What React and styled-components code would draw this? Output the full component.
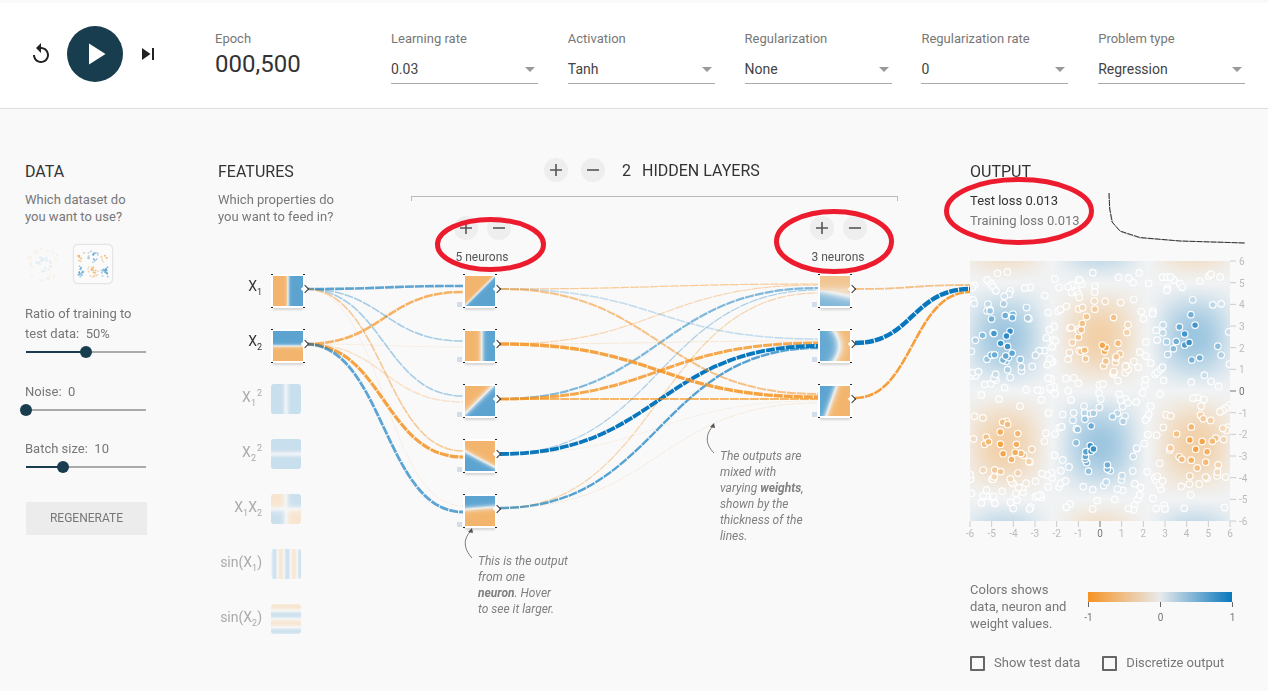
import React, { useEffect, useRef } from 'react'
import styled, { createGlobalStyle } from 'styled-components'

const BLUE = '#0877bd'
const ORANGE = '#f59322'
const DARK = '#183d4e'

const GlobalStyle = createGlobalStyle`
  html, body {
    margin: 0;
    height: 100%;
    overflow: hidden;
    background: #f9f9fa;
    font-family: Roboto, "Liberation Sans", sans-serif;
    color: #777;
  }
`

// colour scale of the playground, v from -1 to 1
const mix = (a, b, t) => a.map((c, i) => c + (b[i] - c) * t)
const scale = v => {
  const neutral = [240, 242, 243]
  const t = Math.max(-1, Math.min(1, v))
  return t < 0 ? mix(neutral, [245, 147, 34], -t) : mix(neutral, [8, 119, 189], t)
}
const rgb = c => `rgb(${c.map(Math.round).join(',')})`

function seeded(seed) {
  let a = seed
  return () => {
    a = (a + 0x6d2b79f5) | 0
    let t = Math.imul(a ^ (a >>> 15), 1 | a)
    t = (t + Math.imul(t ^ (t >>> 7), 61 | t)) ^ t
    return ((t ^ (t >>> 14)) >>> 0) / 4294967296
  }
}

const lobes = (x, y) => -Math.cos((Math.PI * x) / 4.4) * Math.sin((Math.PI * y) / 5)
const sharpen = (f, p) => Math.sign(f) * Math.pow(Math.abs(f), p)

// paints a value function, and optional data points, on a canvas
function HeatMap({ fn, size, points, radius = 3 }) {
  const ref = useRef(null)
  useEffect(() => {
    const ctx = ref.current.getContext('2d')
    if (fn) {
      const img = ctx.createImageData(size, size)
      for (let j = 0; j < size; j++) {
        for (let i = 0; i < size; i++) {
          const c = scale(fn((i / (size - 1)) * 2 - 1, 1 - (j / (size - 1)) * 2))
          const k = (j * size + i) * 4
          img.data[k] = c[0]
          img.data[k + 1] = c[1]
          img.data[k + 2] = c[2]
          img.data[k + 3] = 255
        }
      }
      ctx.putImageData(img, 0, 0)
    }
    if (points) {
      points.forEach(p => {
        ctx.beginPath()
        ctx.arc(p.x, p.y, radius, 0, Math.PI * 2)
        ctx.fillStyle = rgb(scale(p.v))
        ctx.fill()
        if (radius > 2) {
          ctx.strokeStyle = 'rgba(255,255,255,.95)'
          ctx.lineWidth = 1.2
          ctx.stroke()
        }
      })
    }
  }, [fn, size, points, radius])
  return <canvas ref={ref} width={size} height={size} style={{ display: 'block' }} />
}

const plotFn = (x, y) => 0.36 * sharpen(lobes(x * 6, y * 6), 1.3)
const plotPoints = (() => {
  const r = seeded(11)
  const out = []
  for (let i = 0; i < 420; i++) {
    const x = r() * 12 - 6
    const y = r() * 11 - 5.5
    out.push({ x: ((x + 6) / 12) * 260, y: ((6 - y) / 12) * 260, v: sharpen(lobes(x, y), 2) * 0.85 })
  }
  // strongest points are painted last
  return out.sort((a, b) => Math.abs(a.v) - Math.abs(b.v))
})()
const thumbPoints = (() => {
  const r = seeded(5)
  const out = []
  for (let i = 0; i < 120; i++) {
    const x = r() * 10 - 5
    const y = r() * 10 - 5
    const f = lobes(x, y)
    if (Math.abs(f) > 0.3) out.push({ x: 4 + (x + 5) * 3, y: 4 + (5 - y) * 3, v: -f * 0.65 })
  }
  return out
})()
const circlePoints = (() => {
  const r = seeded(9)
  const out = []
  for (let i = 0; i < 60; i++) {
    const a = r() * 6.28
    const d = i % 2 ? 4 + r() * 4 : 12 + r() * 5
    out.push({ x: 19 + Math.cos(a) * d, y: 19 + Math.sin(a) * d, v: i % 2 ? 0.6 : -0.6 })
  }
  return out
})()

const soft = (v, k = 5) => 0.64 * Math.tanh(k * v)

const features = [
  { id: 'x1', y: 276, on: true, fn: x => soft(x, 8), label: <>X<sub>1</sub></> },
  { id: 'x2', y: 331, on: true, fn: (x, y) => soft(y, 8), label: <>X<sub>2</sub></> },
  { id: 'x1s', y: 384, fn: x => 0.62 - 0.5 * Math.exp(-x * x * 30), label: <>X<sub>1</sub><sup>2</sup></> },
  { id: 'x2s', y: 439, fn: (x, y) => 0.62 - 0.5 * Math.exp(-y * y * 30), label: <>X<sub>2</sub><sup>2</sup></> },
  { id: 'x1x2', y: 494, fn: (x, y) => 0.6 * Math.tanh(4 * x) * Math.tanh(4 * y), label: <>X<sub>1</sub>X<sub>2</sub></> },
  { id: 'sin1', y: 549, fn: x => 0.55 * Math.sin(7 * x + 7.17), label: <>sin(X<sub>1</sub>)</> },
  { id: 'sin2', y: 604, fn: (x, y) => 0.55 * Math.sin(5.5 * y), label: <>sin(X<sub>2</sub>)</> }
]

const neurons = [
  { x: 465, y: 276, fn: (x, y) => soft(x - y + 0.02, 7) },
  { x: 465, y: 331, fn: x => soft(x - 0.12, 5) },
  { x: 465, y: 386, fn: (x, y) => soft(x - y + 0.15, 3.5) },
  { x: 465, y: 441, fn: (x, y) => -soft(y + 0.23 + 0.53 * x, 5) },
  { x: 465, y: 496, fn: (x, y) => soft(y - 0.2 - 0.08 * x, 5) },
  { x: 820, y: 276, fn: (x, y) => 0.48 * Math.tanh(-2.4 * y - 0.35 - 0.5 * x * (y < 0 ? 1 : 0)) },
  { x: 820, y: 331, fn: (x, y) => -0.6 * Math.tanh(2.6 * (x + 0.05 - 0.35 * (1 - y * y))) },
  { x: 820, y: 386, fn: (x, y) => -soft(x + 0.25 - 0.35 * y, 4) }
]

const hue = { b: BLUE, o: ORANGE }
const links = [
  // x1, x2 into the first layer
  [305, 289, 463, 286, 'b', 2.6, 0.65],
  [305, 344, 463, 292, 'o', 2.6, 0.7],
  [305, 289, 463, 341, 'b', 1.6, 0.35],
  [305, 344, 463, 347, 'o', 0.8, 0.15],
  [305, 289, 463, 396, 'b', 1.6, 0.35],
  [305, 344, 463, 402, 'o', 1.6, 0.22],
  [305, 289, 463, 451, 'o', 1.6, 0.48],
  [305, 344, 463, 457, 'o', 3.2, 0.85],
  [305, 289, 463, 506, 'o', 0.8, 0.15],
  [305, 344, 463, 512, 'b', 2.8, 0.65],
  // first layer into the second
  [500, 289, 818, 284, 'o', 1.2, 0.45],
  [500, 344, 818, 285, 'o', 1.2, 0.35],
  [500, 399, 818, 288, 'b', 2.2, 0.5],
  [500, 454, 818, 290, 'b', 1.2, 0.32],
  [500, 508, 818, 293, 'o', 1.2, 0.38],
  [500, 289, 818, 339, 'b', 1.6, 0.22],
  [500, 344, 818, 341, 'o', 0.8, 0.2],
  [500, 399, 818, 343, 'o', 3, 0.8],
  [500, 454, 818, 346, 'b', 3.8, 1],
  [500, 508, 818, 348, 'b', 2.4, 0.68],
  [500, 289, 818, 394, 'o', 2, 0.55],
  [500, 344, 818, 397, 'o', 3.4, 0.85],
  [500, 399, 818, 399, 'o', 2, 0.65],
  [500, 454, 818, 401, 'o', 0.8, 0.12],
  [500, 508, 818, 403, 'o', 0.8, 0.18],
  // second layer into the output
  [855, 289, 970, 285, 'o', 1.8, 0.55],
  [855, 343, 970, 289, 'b', 4.4, 1],
  [855, 398, 970, 292, 'o', 2.6, 0.9]
]
const curve = ([x0, y0, x1, y1]) => {
  const m = (x0 + x1) / 2
  return `M${x0},${y0} C${m},${y0} ${m},${y1} ${x1},${y1}`
}

const Page = styled.div`
  position: relative;
  width: 1268px;
  height: 691px;
  overflow: hidden;
`
const Header = styled.header`
  display: flex;
  height: 105px;
  margin-top: 3px;
  background: #fff;
  border-bottom: 1px solid #ddd;
`
const Transport = styled.div`
  display: flex;
  align-items: center;
  width: 186px;
  height: 102px;
  padding-left: 29px;
`
const IconButton = styled.div`
  width: 24px;
  height: 24px;
  color: #222;
  margin: ${p => p.$margin || 0};
  svg { display: block; fill: currentColor; }
`
const PlayButton = styled.div`
  display: flex;
  align-items: center;
  justify-content: center;
  width: 56px;
  height: 56px;
  margin-left: 14px;
  border-radius: 50%;
  background: ${DARK};
  svg { fill: #fff; }
`
const Epoch = styled.div`
  width: 176px;
  padding-top: 27px;
`
const FieldLabel = styled.div`
  font-size: 13px;
  line-height: 17px;
  color: #777;
`
const EpochValue = styled.div`
  font-size: 24px;
  line-height: 34px;
  color: #333;
`
const Fields = styled.div`
  display: flex;
  gap: 29.8px;
  padding-top: 27px;
`
const Field = styled.div`
  width: 147px;
`
const SelectBox = styled.div`
  position: relative;
  height: 29px;
  margin-top: 7px;
  border-bottom: 1px solid #aaa;
  font-size: 14px;
  line-height: 30px;
  color: #444;
  &::after {
    content: '';
    position: absolute;
    right: 3px;
    top: 13px;
    border-left: 5px solid transparent;
    border-right: 5px solid transparent;
    border-top: 5px solid #999;
  }
`
const Main = styled.main`
  display: flex;
  padding: 53px 0 0 25px;
`
const DataColumn = styled.section`
  width: 193px;
  flex: none;
`
const Heading = styled.h4`
  margin: 0;
  font-size: 16px;
  font-weight: 400;
  line-height: 20px;
  color: #333;
`
const Hint = styled.p`
  margin: 9px 0 0;
  font-size: 13px;
  line-height: 17px;
  color: #777;
`
const Thumbs = styled.div`
  display: flex;
  gap: 11px;
  margin-top: 20px;
  height: 39px;
`
const Thumb = styled.div`
  width: 38px;
  height: 38px;
  border-radius: 4px;
  overflow: hidden;
  opacity: ${p => (p.$selected ? 1 : 0.16)};
  background: ${p => (p.$selected ? '#fbfbfb' : 'transparent')};
  box-shadow: ${p => (p.$selected ? '0 0 2px rgba(0,0,0,.3)' : 'none')};
`
const SliderLabel = styled.div`
  margin-top: ${p => p.$top}px;
  width: 130px;
  font-size: 13px;
  line-height: 20px;
  color: #777;
  white-space: pre-wrap;
`
const Slider = styled.div`
  position: relative;
  width: 120px;
  height: 16px;
  margin: 0 0 0 1px;
  &::before {
    content: '';
    position: absolute;
    left: 0;
    right: 0;
    top: 7px;
    height: 2px;
    background: #aaa;
  }
`
const SliderFill = styled.div`
  position: absolute;
  left: 0;
  top: 7px;
  height: 2px;
  width: ${p => p.$value}%;
  background: ${DARK};
`
const SliderThumb = styled.div`
  position: absolute;
  top: 2px;
  left: calc(${p => p.$value}% - 6px);
  width: 12px;
  height: 12px;
  border-radius: 50%;
  background: ${DARK};
`
const Regenerate = styled.div`
  width: 121px;
  height: 33px;
  margin: 27px 0 0 1px;
  background: #ececec;
  font-size: 12px;
  line-height: 33px;
  text-align: center;
  color: #777;
`
const DiagramColumn = styled.section`
  width: 752px;
  flex: none;
`
const DiagramHead = styled.div`
  display: flex;
  height: 103px;
`
const FeatureHead = styled.div`
  width: 193px;
  flex: none;
`
const HiddenHead = styled.div`
  width: 487px;
`
const LayerTitle = styled.div`
  display: flex;
  align-items: center;
  gap: 13px;
  height: 20px;
  margin-top: -2px;
  padding-left: 133px;
`
const Round = styled.div`
  display: flex;
  align-items: center;
  justify-content: center;
  width: 24px;
  height: 24px;
  flex: none;
  border-radius: 50%;
  background: #eeeeee;
  color: #555;
  svg { display: block; }
`
const LayerCount = styled.span`
  margin-left: 4px;
  font-size: 16px;
  color: #333;
`
const LayerName = styled.span`
  margin-left: -2px;
  font-size: 16px;
  color: #333;
`
const Bracket = styled.div`
  height: 4px;
  margin-top: 16px;
  border: 1px solid #bbb;
  border-bottom: 0;
`
const LayerRow = styled.div`
  display: flex;
  justify-content: space-between;
  padding: 15px 10px 0 21px;
`
const LayerControl = styled.div`
  width: 100px;
`
const LayerButtons = styled.div`
  display: flex;
  justify-content: center;
  gap: 9px;
`
const NeuronCount = styled.div`
  margin-top: 9px;
  font-size: 12px;
  line-height: 16px;
  text-align: center;
  color: #555;
`
const Canvas = styled.div`
  position: relative;
  height: 420px;
`
const Wires = styled.svg`
  position: absolute;
  left: 0;
  top: 0;
  overflow: visible;
`
const Node = styled.div`
  position: absolute;
  left: ${p => p.$x - 218}px;
  top: ${p => p.$y - 265}px;
  width: 30px;
  height: 30px;
  border-radius: ${p => (p.$active ? 0 : 3)}px;
  overflow: visible;
  box-shadow: ${p => (p.$active ? '0 0 0 2px #fff, 0 4px 2px 0 rgba(0,0,0,.14)' : 'none')};
  canvas { opacity: ${p => (p.$active ? 1 : 0.32)}; border-radius: ${p => (p.$active ? 0 : 3)}px; }
  ${p => p.$active && `
    &::before {
      content: '';
      position: absolute;
      inset: -2px;
      background:
        linear-gradient(#222, #222) 0 0 / 2px 1px no-repeat,
        linear-gradient(#222, #222) 100% 0 / 2px 1px no-repeat,
        linear-gradient(#222, #222) 0 100% / 2px 1px no-repeat,
        linear-gradient(#222, #222) 100% 100% / 2px 1px no-repeat;
      pointer-events: none;
    }
    &::after {
      content: '';
      position: absolute;
      right: -5px;
      top: 10px;
      width: 5px;
      height: 5px;
      transform: rotate(45deg);
      background: #fff;
      border-top: 1px solid #333;
      border-right: 1px solid #333;
    }
  `}
`
const Bias = styled.div`
  position: absolute;
  left: -8px;
  top: 26px;
  width: 5px;
  height: 5px;
  background: #d3dce9;
`
const FeatureLabel = styled.div`
  position: absolute;
  right: calc(100% + ${p => (p.$active ? 11 : 9)}px);
  top: ${p => (p.$active ? 0 : 3)}px;
  font-size: 14px;
  line-height: 20px;
  white-space: nowrap;
  color: ${p => (p.$active ? '#333' : '#aaa')};
  sub, sup { font-size: 9px; line-height: 0; }
  sup { margin-left: 1px; }
`
const Note = styled.div`
  position: absolute;
  left: ${p => p.$x - 218}px;
  top: ${p => p.$y - 265}px;
  width: ${p => p.$width}px;
  font-size: 12px;
  font-style: italic;
  line-height: 16px;
  color: #808080;
  b { font-weight: 700; }
`
const OutputColumn = styled.section`
  width: 275px;
  flex: none;
`
const LossRow = styled.div`
  display: flex;
  height: 79px;
`
const LossText = styled.div`
  width: 139px;
  padding-top: 9px;
  font-size: 13px;
  line-height: 20px;
  color: #777;
`
const TestLoss = styled.div`
  color: #333;
`
const LossChart = styled.svg`
  display: block;
  flex: none;
  margin-top: 1px;
`
const Plot = styled.div`
  position: relative;
  width: 260px;
  height: 260px;
`
const PlotAxes = styled.svg`
  position: absolute;
  left: 0;
  top: 0;
  overflow: visible;
  font-family: Roboto, "Liberation Sans", sans-serif;
  font-size: 10px;
`
const LegendRow = styled.div`
  display: flex;
  margin-top: 60px;
  height: 74px;
`
const LegendText = styled.div`
  width: 118px;
  font-size: 13px;
  line-height: 17px;
  color: #777;
`
const ColorScale = styled.div`
  position: relative;
  width: 144px;
  height: 10px;
  margin-top: 11px;
  background: linear-gradient(to right, ${ORANGE}, #e8eaeb, ${BLUE});
`
const ScaleTick = styled.div`
  position: absolute;
  top: 10px;
  left: ${p => p.$at}%;
  width: 1px;
  height: 5px;
  background: #666;
`
const ScaleLabel = styled.span`
  position: absolute;
  top: 10px;
  left: 50%;
  transform: translateX(-50%);
  font-size: 10px;
  line-height: 12px;
  color: #777;
`
const Checks = styled.div`
  display: flex;
  gap: 22px;
  font-size: 13px;
  color: #777;
`
const Check = styled.label`
  display: flex;
  align-items: center;
  gap: 9px;
  line-height: 16px;
`
const Box = styled.span`
  width: 11px;
  height: 11px;
  border: 2px solid #666;
  border-radius: 1px;
`
const Annotations = styled.svg`
  position: absolute;
  left: 0;
  top: 0;
  pointer-events: none;
`

function SliderRow({ value }) {
  return (
    <Slider>
      <SliderFill $value={value} />
      <SliderThumb $value={value} />
    </Slider>
  )
}

const PlusIcon = () => (
  <svg width="14" height="14" viewBox="0 0 14 14"><path d="M7 1v12M1 7h12" stroke="currentColor" strokeWidth="1.6" /></svg>
)
const MinusIcon = () => (
  <svg width="14" height="14" viewBox="0 0 14 14"><path d="M1 7h12" stroke="currentColor" strokeWidth="1.6" /></svg>
)

const selects = [
  ['Learning rate', '0.03'],
  ['Activation', 'Tanh'],
  ['Regularization', 'None'],
  ['Regularization rate', '0'],
  ['Problem type', 'Regression']
]

function App() {
  const ticks = [6, 5, 4, 3, 2, 1, 0, -1, -2, -3, -4, -5, -6]
  return (
    <Page>
      <GlobalStyle />
      <Header>
        <Transport>
          <IconButton>
            <svg width="24" height="24" viewBox="0 0 24 24"><path d="M12 5V1L7 6l5 5V7c3.31 0 6 2.69 6 6s-2.69 6-6 6-6-2.69-6-6H4c0 4.42 3.58 8 8 8s8-3.58 8-8-3.58-8-8-8z" /></svg>
          </IconButton>
          <PlayButton>
            <svg width="36" height="36" viewBox="0 0 24 24"><path d="M8 5v14l11-7z" /></svg>
          </PlayButton>
          <IconButton $margin="0 0 0 13px">
            <svg width="24" height="24" viewBox="0 0 24 24"><path d="M6 18l8.5-6L6 6v12zM16 6v12h2V6h-2z" /></svg>
          </IconButton>
        </Transport>
        <Epoch>
          <FieldLabel>Epoch</FieldLabel>
          <EpochValue>000,500</EpochValue>
        </Epoch>
        <Fields>
          {selects.map(([label, value]) => (
            <Field key={label}>
              <FieldLabel>{label}</FieldLabel>
              <SelectBox>{value}</SelectBox>
            </Field>
          ))}
        </Fields>
      </Header>

      <Main>
        <DataColumn>
          <Heading>DATA</Heading>
          <Hint>Which dataset do<br />you want to use?</Hint>
          <Thumbs>
            <Thumb><HeatMap size={38} points={circlePoints} radius={1} /></Thumb>
            <Thumb $selected><HeatMap size={38} points={thumbPoints} radius={1} /></Thumb>
          </Thumbs>
          <SliderLabel $top={20}>Ratio of training to{'\n'}test data:  50%</SliderLabel>
          <SliderRow value={50} />
          <SliderLabel $top={22}>Noise:  0</SliderLabel>
          <SliderRow value={0} />
          <SliderLabel $top={21}>Batch size:  10</SliderLabel>
          <SliderRow value={31} />
          <Regenerate>REGENERATE</Regenerate>
        </DataColumn>

        <DiagramColumn>
          <DiagramHead>
            <FeatureHead>
              <Heading>FEATURES</Heading>
              <Hint>Which properties do<br />you want to feed in?</Hint>
            </FeatureHead>
            <HiddenHead>
              <LayerTitle>
                <Round><PlusIcon /></Round>
                <Round><MinusIcon /></Round>
                <LayerCount>2</LayerCount>
                <LayerName>HIDDEN LAYERS</LayerName>
              </LayerTitle>
              <Bracket />
              <LayerRow>
                {[5, 3].map(n => (
                  <LayerControl key={n}>
                    <LayerButtons>
                      <Round><PlusIcon /></Round>
                      <Round><MinusIcon /></Round>
                    </LayerButtons>
                    <NeuronCount>{n} neurons</NeuronCount>
                  </LayerControl>
                ))}
              </LayerRow>
            </HiddenHead>
          </DiagramHead>

          <Canvas>
            <Wires width="752" height="420" viewBox="218 265 752 420" fill="none">
              {links.map((l, i) => (
                <path
                  key={i}
                  d={curve(l)}
                  stroke={hue[l[4]]}
                  strokeWidth={l[5]}
                  strokeOpacity={l[6]}
                  strokeDasharray="9 1"
                />
              ))}
              <path d="M472 558C463 548 463 538 472 530" stroke="#777" />
              <path d="M472 528l-4 4 5 1z" fill="#555" />
              <path d="M714 453C705 444 705 434 714 425" stroke="#777" />
              <path d="M714 423l-4 4 5 1z" fill="#555" />
            </Wires>
            {features.map(f => (
              <Node key={f.id} $x={f.on ? 273 : 271} $y={f.y} $active={f.on}>
                <HeatMap fn={f.fn} size={30} />
                <FeatureLabel $active={f.on}>{f.label}</FeatureLabel>
              </Node>
            ))}
            {neurons.map((n, i) => (
              <Node key={i} $x={n.x} $y={n.y} $active>
                <HeatMap fn={n.fn} size={30} />
                <Bias />
              </Node>
            ))}
            <Note $x={478} $y={553} $width={110}>
              This is the output<br />from one<br /><b>neuron</b>. Hover<br />to see it larger.
            </Note>
            <Note $x={720} $y={448} $width={100}>
              The outputs are<br />mixed with<br />varying <b>weights</b>,<br />shown by the<br />thickness of the<br />lines.
            </Note>
          </Canvas>
        </DiagramColumn>

        <OutputColumn>
          <Heading>OUTPUT</Heading>
          <LossRow>
            <LossText>
              <TestLoss>Test loss 0.013</TestLoss>
              <div>Training loss 0.013</div>
            </LossText>
            <LossChart width="137" height="62" viewBox="1108 183 137 62" fill="none">
              <path d="M1109 193L1110 210 1113 223 1121 232 1140 238 1180 241 1245 243" stroke="#bbb" strokeLinejoin="round" />
              <path d="M1109 193L1109.6 208 1112 222 1120 231 1140 237.5 1180 241 1245 243" stroke="#222" strokeWidth=".9" strokeDasharray="6 1" />
            </LossChart>
          </LossRow>
          <Plot>
            <HeatMap fn={plotFn} size={260} points={plotPoints} radius={3.3} />
            <PlotAxes width="260" height="260" viewBox="0 0 260 260">
              {ticks.map(t => {
                const at = ((6 - t) / 12) * 260
                return (
                  <g key={t} fill={t === 0 ? '#777' : '#bbb'}>
                    <path d={`M260 ${at}h6`} stroke={t === 0 ? '#777' : '#ccc'} />
                    <text x="269" y={at + 4}>{t}</text>
                    <path d={`M${260 - at} 260v6`} stroke={t === 0 ? '#777' : '#ccc'} />
                    <text x={260 - at} y="276" textAnchor="middle">{t}</text>
                  </g>
                )
              })}
            </PlotAxes>
          </Plot>
          <LegendRow>
            <LegendText>Colors shows<br />data, neuron and<br />weight values.</LegendText>
            <ColorScale>
              <ScaleTick $at={0}><ScaleLabel>-1</ScaleLabel></ScaleTick>
              <ScaleTick $at={50}><ScaleLabel>0</ScaleLabel></ScaleTick>
              <ScaleTick $at={100}><ScaleLabel>1</ScaleLabel></ScaleTick>
            </ColorScale>
          </LegendRow>
          <Checks>
            <Check><Box />Show test data</Check>
            <Check><Box />Discretize output</Check>
          </Checks>
        </OutputColumn>
      </Main>

      <Annotations width="1268" height="691" fill="none" stroke="#ec1c2e" strokeWidth="5">
        <ellipse cx="490.5" cy="244.5" rx="53" ry="25" />
        <ellipse cx="834" cy="241.5" rx="57.5" ry="30" />
        <ellipse cx="1019" cy="211" rx="72.5" ry="31.5" />
      </Annotations>
    </Page>
  )
}

export default App
